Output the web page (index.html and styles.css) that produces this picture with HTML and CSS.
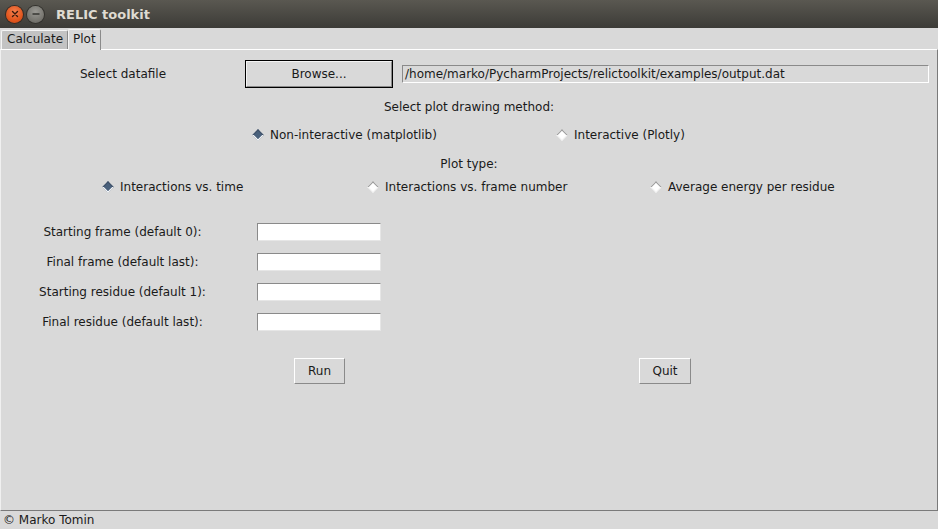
FILE: index.html
```html
<!DOCTYPE html>
<html>
<head>
<meta charset="utf-8">
<title>RELIC toolkit</title>
<link rel="stylesheet" href="styles.css">
</head>
<body>
<div class="window">
  <div class="titlebar">
    <span class="wbtn close"><svg width="16" height="16" viewBox="0 0 16 16"><path d="M5.5 5.5 L10.5 10.5 M10.5 5.5 L5.5 10.5" stroke="#3a1a0c" stroke-width="1.4" stroke-linecap="round"/></svg></span>
    <span class="wbtn mini"><svg width="16" height="16" viewBox="0 0 16 16"><path d="M4.5 8 H11.5" stroke="#3b3b38" stroke-width="1.6"/></svg></span>
    <span class="title">RELIC toolkit</span>
  </div>
  <div class="tabs">
    <div class="tab">Calculate</div>
    <div class="tab active">Plot</div>
  </div>
  <div class="panel">
    <div class="row-file">
      <div class="lbl-file">Select datafile</div>
      <div class="browse"><div class="browse-in">Browse...</div></div>
      <div class="path">/home/marko/PycharmProjects/relictoolkit/examples/output.dat</div>
    </div>
    <div class="heading h1">Select plot drawing method:</div>
    <div class="radios r1">
      <div class="radio w304"><span class="dia on"></span>Non-interactive (matplotlib)</div>
      <div class="radio"><span class="dia"></span>Interactive (Plotly)</div>
    </div>
    <div class="heading h2">Plot type:</div>
    <div class="radios r2">
      <div class="radio w265"><span class="dia on"></span>Interactions vs. time</div>
      <div class="radio w283"><span class="dia"></span>Interactions vs. frame number</div>
      <div class="radio"><span class="dia"></span>Average energy per residue</div>
    </div>
    <div class="fields">
      <div class="field"><div class="flbl">Starting frame (default 0):</div><div class="entry"></div></div>
      <div class="field"><div class="flbl">Final frame (default last):</div><div class="entry"></div></div>
      <div class="field"><div class="flbl">Starting residue (default 1):</div><div class="entry"></div></div>
      <div class="field"><div class="flbl">Final residue (default last):</div><div class="entry"></div></div>
    </div>
    <div class="actions">
      <div class="btn run">Run</div>
      <div class="btn quit">Quit</div>
    </div>
  </div>
  <div class="status">© Marko Tomin</div>
</div>
</body>
</html>
```
FILE: styles.css
```css
* { box-sizing: border-box; }
html, body { margin: 0; padding: 0; }
body {
  width: 938px;
  height: 529px;
  overflow: hidden;
  background: #d9d9d9;
  font-family: "DejaVu Sans", sans-serif;
  font-size: 12px;
  color: #1a1a1a;
}
.window { width: 938px; height: 529px; display: flex; flex-direction: column; }

.titlebar {
  height: 28px;
  flex: none;
  background: linear-gradient(#5a5851, #3c3b37);
  display: flex;
  align-items: center;
  padding-left: 6px;
}
.wbtn {
  width: 17px; height: 17px; border-radius: 50%;
  display: flex; align-items: center; justify-content: center;
  margin-right: 3px;
}
.wbtn svg { display: block; }
.close { background: radial-gradient(circle at 50% 35%, #f7804f, #e2561d 60%, #c7420f); box-shadow: 0 0 0 1px #3a2a22; }
.mini { background: radial-gradient(circle at 50% 35%, #9a9994, #76756f 65%, #5f5e59); box-shadow: 0 0 0 1px #33322e; margin-left: 1px; }
.title {
  margin-left: 9px;
  font-weight: bold;
  font-size: 13px;
  color: #dfdbd2;
}

.tabs {
  height: 21px;
  flex: none;
  display: flex;
  align-items: flex-end;
  padding-left: 1px;
  background: #d9d9d9;
}
.tab {
  height: 19px;
  padding: 0 4px 0 5px;
  background: #c3c3c3;
  border-left: 1px solid #f4f4f4;
  border-top: 1px solid #f4f4f4;
  border-right: 1px solid #8a8a8a;
  border-radius: 2px 2px 0 0;
  line-height: 17px;
  font-size: 12px;
}
.tab.active {
  height: 21px;
  background: #d9d9d9;
  line-height: 19px;
  padding: 0 4px 0 4px;
  margin-bottom: -1px;
  position: relative;
  z-index: 1;
}

.panel {
  flex: none;
  height: 462px;
  background: #d9d9d9;
  border-top: 1px solid #ffffff;
  border-left: 1px solid #f0f0f0;
  border-right: 1px solid #7a7a7a;
  border-bottom: 1px solid #7a7a7a;
  display: flex;
  flex-direction: column;
}

.row-file {
  margin-top: 10px;
  height: 28px;
  display: flex;
  align-items: center;
}
.lbl-file { width: 244px; text-align: center; }
.browse {
  width: 148px; height: 28px;
  border: 1px solid #000;
}
.browse-in {
  height: 100%;
  border-top: 1px solid #f4f4f4;
  border-left: 1px solid #f4f4f4;
  border-right: 1px solid #8a8a8a;
  border-bottom: 1px solid #8a8a8a;
  display: flex; align-items: center; justify-content: center;
}
.path {
  margin-left: 9px;
  width: 527px;
  height: 18px;
  border-top: 1px solid #8a8a8a;
  border-left: 1px solid #8a8a8a;
  border-right: 1px solid #ffffff;
  border-bottom: 1px solid #ffffff;
  padding-left: 2px;
  line-height: 16px;
  white-space: nowrap;
  overflow: hidden;
}

.heading { height: 20px; line-height: 20px; text-align: center; }
.h1 { margin-top: 9px; }
.h2 { margin-top: 9px; }

.radios { height: 20px; display: flex; align-items: center; }
.r1 { margin-top: 8px; padding-left: 251px; }
.r2 { margin-top: 3px; padding-left: 101px; }
.radio { display: flex; align-items: center; white-space: nowrap; }
.w304 { width: 304px; }
.w265 { width: 265px; }
.w283 { width: 283px; }
.dia {
  width: 8px; height: 8px;
  margin: 0 8px 0 2px;
  transform: rotate(45deg);
  background: #ffffff;
  border-top: 1px solid #9a9a9a;
  border-left: 1px solid #9a9a9a;
  border-right: 1px solid #f4f4f4;
  border-bottom: 1px solid #f4f4f4;
}
.dia.on {
  background: #4a617c;
  border-top-color: #3e5068;
  border-left-color: #3e5068;
  border-right-color: #ffffff;
  border-bottom-color: #ffffff;
}

.fields { margin-top: 26px; display: flex; flex-direction: column; gap: 12px; }
.field { height: 18px; display: flex; align-items: center; }
.flbl { width: 243px; margin-right: 13px; text-align: center; white-space: nowrap; }
.entry {
  width: 124px; height: 18px;
  background: #ffffff;
  border-top: 1px solid #8a8a8a;
  border-left: 1px solid #8a8a8a;
  border-right: 1px solid #e6e6e6;
  border-bottom: 1px solid #e6e6e6;
}

.actions { margin-top: 27px; display: flex; height: 26px; }
.btn {
  height: 26px;
  border-top: 1px solid #ffffff;
  border-left: 1px solid #ffffff;
  border-right: 1px solid #8a8a8a;
  border-bottom: 1px solid #8a8a8a;
  display: flex; align-items: center; justify-content: center;
}
.run { margin-left: 293px; width: 51px; }
.quit { margin-left: 294px; width: 52px; }

.status {
  flex: none;
  height: 18px;
  line-height: 18px;
  padding-left: 3px;
  background: #d9d9d9;
}
```
